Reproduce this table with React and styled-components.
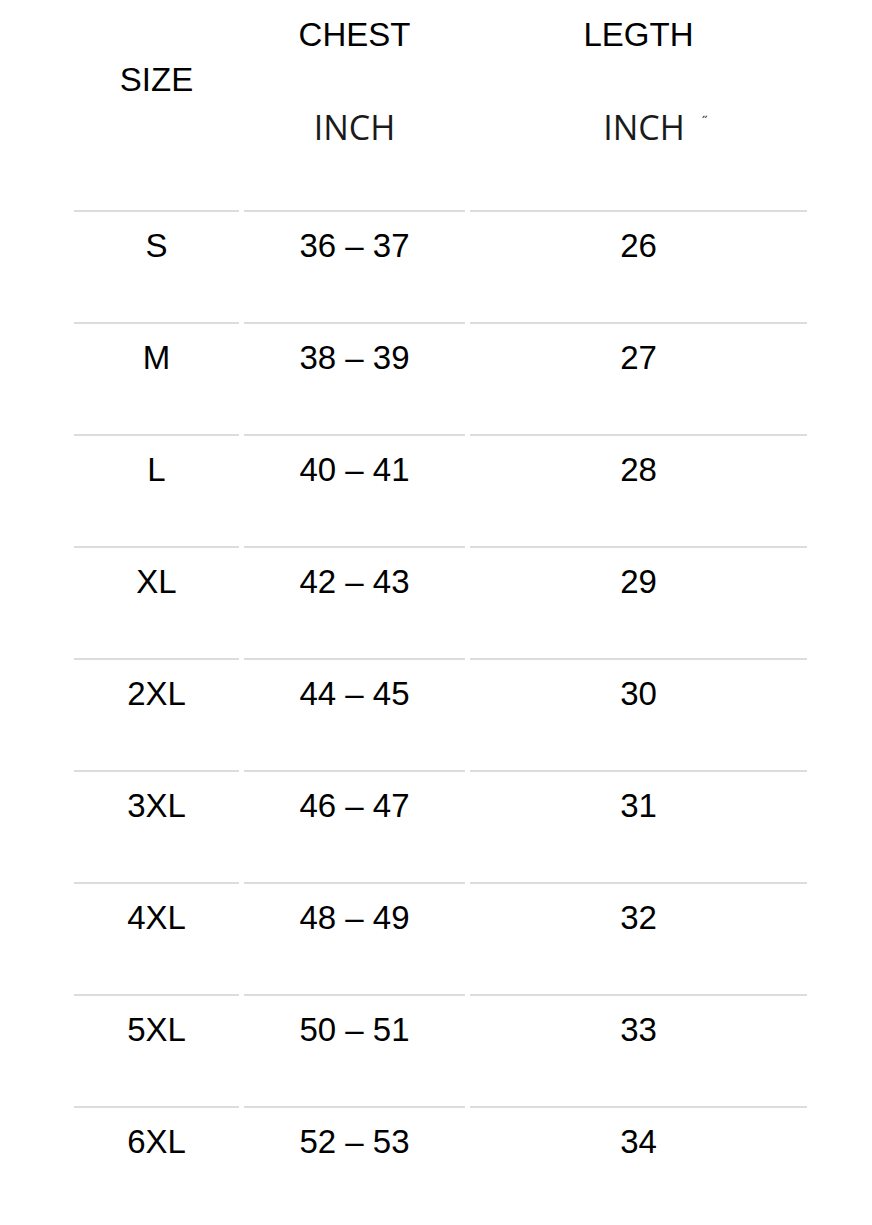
import styled, { createGlobalStyle } from 'styled-components';

const GlobalStyle = createGlobalStyle`
  html, body {
    margin: 0;
    padding: 0;
    background: #fff;
  }
`;

const sizes = [
    { size: 'S', chest: '36 – 37', length: '26' },
    { size: 'M', chest: '38 – 39', length: '27' },
    { size: 'L', chest: '40 – 41', length: '28' },
    { size: 'XL', chest: '42 – 43', length: '29' },
    { size: '2XL', chest: '44 – 45', length: '30' },
    { size: '3XL', chest: '46 – 47', length: '31' },
    { size: '4XL', chest: '48 – 49', length: '32' },
    { size: '5XL', chest: '50 – 51', length: '33' },
    { size: '6XL', chest: '52 – 53', length: '34' },
];

const App = () => {
    return (
        <>
            <GlobalStyle />
            <Chart>
                <HeadCell>
                    <Label $top={60}>SIZE</Label>
                </HeadCell>
                <HeadCell>
                    <Label $top={15}>CHEST</Label>
                    <Unit>INCH</Unit>
                </HeadCell>
                <HeadCell>
                    <Label $top={15}>LEGTH</Label>
                    <Unit $shift={11}>
                        INCH<Mark><span>˝</span></Mark>
                    </Unit>
                </HeadCell>

                {sizes.map((row) => (
                    <Row key={row.size}>
                        <Cell>{row.size}</Cell>
                        <Cell>{row.chest}</Cell>
                        <Cell>{row.length}</Cell>
                    </Row>
                ))}
            </Chart>
        </>
    )
}

const Chart = styled.div`
  display: grid;
  grid-template-columns: 165px 221px 337px;
  column-gap: 5px;
  margin-left: 74px;
  width: 738px;
  font-family: "Liberation Sans", Arial, sans-serif;
  color: #000;
`;

const HeadCell = styled.div`
  height: 210px;
  display: flex;
  flex-direction: column;
  align-items: center;
`;

const Label = styled.div`
  padding-top: ${(p) => p.$top}px;
  font-size: 33px;
  line-height: 40px;
`;

const Unit = styled.div`
  margin-top: 52px;
  padding-left: ${(p) => p.$shift || 0}px;
  font-family: "Open Sans", "Noto Sans", sans-serif;
  font-size: 34px;
  line-height: 40px;
  color: #1a1a1a;
  white-space: nowrap;
`;

const Mark = styled.span`
  position: relative;
  display: inline-block;
  width: 0;

  span {
    position: absolute;
    left: 17px;
    top: -25px;
    font-size: 14px;
    line-height: 14px;
    color: #111;
  }
`;

const Row = styled.div`
  display: contents;
`;

const Cell = styled.div`
  height: 96px;
  padding-top: 14px;
  border-top: 2px solid #dcdcdc;
  text-align: center;
  font-size: 33px;
  line-height: 40px;
`;

export default App
